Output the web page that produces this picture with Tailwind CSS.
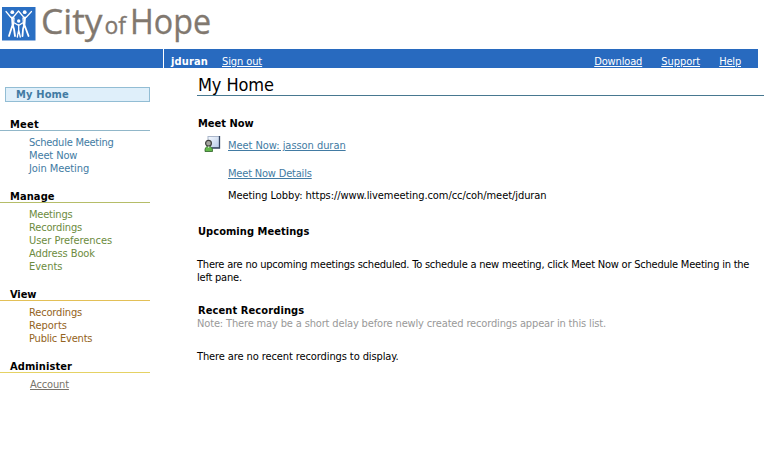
<!DOCTYPE html>
<html lang="en">
<head>
<meta charset="utf-8">
<title>My Home</title>
<script src="https://cdn.jsdelivr.net/npm/@tailwindcss/browser@4"></script>
</head>
<body class="w-[769px] h-[452px] overflow-hidden bg-white text-black font-['DejaVu_Sans_Condensed','DejaVu_Sans',sans-serif] text-[11px] leading-[13px] whitespace-nowrap">
<header>
  <div class="h-[49px]">
    <svg class="block overflow-visible" width="220" height="49" viewBox="0 0 220 49">
      <rect x="2" y="7" width="33.5" height="33.5" fill="#2a6fc3"/>
      <g fill="none" stroke="#fff" stroke-linecap="round" stroke-linejoin="round">
        <path d="M6 11.5 11 17.5 13 17.500 18.500 11 24 17.500 26 17.500 31.500 11.500" stroke-width="1.200"/>
        <path d="M12 17.500 12.500 25 9 36 M12.500 24 14 29 15 36" stroke-width="1.800"/>
        <path d="M25 17.500 24.500 25 28.500 36 M24.500 24 23 29 22.500 36" stroke-width="1.800"/>
        <path d="M11.500 18 14 18 13.500 25 M25.500 18 23 18 23.500 25" stroke-width="1.300"/>
        <path d="M14.500 23 18.700 25.500 22.500 23 M18.700 25 18.700 30 17.300 37 M18.700 30 20.300 37" stroke-width="1.300"/>
      </g>
      <g fill="#fff"><circle cx="12.300" cy="12.200" r="1.900"/><circle cx="24.700" cy="12.200" r="1.900"/><circle cx="18.700" cy="21" r="1.700"/></g>
      <g fill="#81786f" stroke="#81786f" stroke-width=".35" font-family="Open Sans, sans-serif">
        <text x="41" y="33.500" font-size="35.500" textLength="61.500" lengthAdjust="spacingAndGlyphs">City</text>
        <text x="104.500" y="33.500" font-size="24" textLength="21.500" lengthAdjust="spacingAndGlyphs">of</text>
        <text x="130" y="33.500" font-size="35.500" textLength="81" lengthAdjust="spacingAndGlyphs">Hope</text>
      </g>
    </svg>
  </div>
  <div class="flex h-[19px] w-[758px] bg-[#286abf] pt-[6px] text-white">
    <div class="-mt-[6px] h-[19px] w-[164px] border-r border-white"></div>
    <b class="ml-[7px] w-[51px] tracking-[0.15px]">jduran</b>
    <a class="underline tracking-[-0.1px]">Sign out</a>
    <div class="ml-auto flex pr-[17px]"><a class="w-[67px]"><span class="underline tracking-[-0.15px]">Download</span></a><a class="w-[58px]"><span class="underline tracking-[-0.05px]">Support</span></a><a class="underline tracking-[-0.2px]">Help</a></div>
  </div>
</header>
<div class="flex">
  <nav class="w-[150px] pt-[19px]">
    <div class="ml-[5px] h-[15px] border border-[#92bdd4] bg-[#dfeffa] pl-[10px] font-bold text-[#427ba3] leading-[14px] tracking-[0.15px]">My Home</div>
    <div class="mt-[16px] flex flex-col gap-[15px]">
      <section>
        <h2 class="mb-[5px] h-[13px] border-b border-[#91b7c9] pl-[10px] font-bold tracking-[0.2px]">Meet</h2>
        <div class="flex flex-col items-start pl-[29px] text-[#427ba3]"><a class="tracking-[-0.25px]">Schedule Meeting</a><a class="tracking-[-0.12px]">Meet Now</a><a class="tracking-[-0.08px]">Join Meeting</a></div>
      </section>
      <section>
        <h2 class="mb-[5px] h-[13px] border-b border-[#b5bd68] pl-[10px] font-bold tracking-[0.1px]">Manage</h2>
        <div class="flex flex-col items-start pl-[29px] text-[#6c8b40]"><a class="tracking-[-0.2px]">Meetings</a><a class="tracking-[-0.15px]">Recordings</a><a class="tracking-[-0.05px]">User Preferences</a><a class="tracking-[-0.1px]">Address Book</a><a>Events</a></div>
      </section>
      <section>
        <h2 class="mb-[5px] h-[13px] border-b border-[#e3c057] pl-[10px] font-bold tracking-[-0.1px]">View</h2>
        <div class="flex flex-col items-start pl-[29px] text-[#946321]"><a class="tracking-[-0.15px]">Recordings</a><a>Reports</a><a class="tracking-[-0.2px]">Public Events</a></div>
      </section>
      <section>
        <h2 class="mb-[5px] h-[13px] border-b border-[#e5d264] pl-[10px] font-bold tracking-[0.1px]">Administer</h2>
        <div class="flex flex-col items-start pl-[30px] text-[#77736a]"><a class="underline tracking-[-0.15px]">Account</a></div>
      </section>
    </div>
  </nav>
  <main class="ml-[47px] w-[567px]">
    <h1 class="h-[28px] border-b border-[#477890] pl-px pt-[6px] text-[18px] leading-[22px] tracking-[-0.1px]">My Home</h1>
    <h2 class="mt-[21px] pl-px font-bold">Meet Now</h2>
    <div class="mt-[6px] flex h-[17px] pl-[7px]">
      <svg width="17" height="17" viewBox="0 0 17 17">
        <defs><linearGradient id="s" x1="0" y1="0" x2="1" y2="1"><stop offset="0" stop-color="#f6faff"/><stop offset="1" stop-color="#b7cae8"/></linearGradient></defs>
        <rect x="4" y="0.500" width="11.500" height="11" fill="url(#s)" stroke="#aab6ca"/>
        <path d="M15.500 0V12H8" fill="none" stroke="#33435f" stroke-width="1.300"/>
        <path d="M1 15.500Q.5 10.500 4.500 10.200Q9 10.500 8.500 15.500Z" fill="#63b94b" stroke="#2c6127" stroke-width=".8"/>
        <circle cx="4.500" cy="7.300" r="2.900" fill="#a5a5a0" stroke="#3f403e" stroke-width="1.200"/>
        <path d="M3.600 10.500 4.600 12 5.700 10.500" fill="#eff8e9"/>
      </svg>
      <a class="ml-[7px] pt-[3px] text-[#427ba3] underline tracking-[-0.05px]">Meet Now: jasson duran</a>
    </div>
    <div class="mt-[14px] pl-[31px]"><a class="text-[#427ba3] underline tracking-[-0.19px]">Meet Now Details</a></div>
    <p class="mt-[9px] pl-[31px] tracking-[-0.065px]">Meeting Lobby: https://www.livemeeting.com/cc/coh/meet/jduran</p>
    <h2 class="mt-[23px] pl-px font-bold tracking-[0.05px]">Upcoming Meetings</h2>
    <p class="mt-[20px] tracking-[-0.22px]">There are no upcoming meetings scheduled. To schedule a new meeting, click Meet Now or Schedule Meeting in the<br>left pane.</p>
    <h2 class="mt-[20px] pl-px font-bold tracking-[0.1px]">Recent Recordings</h2>
    <p class="text-[#999] tracking-[-0.15px]">Note: There may be a short delay before newly created recordings appear in this list.</p>
    <p class="mt-[20px] tracking-[-0.1px]">There are no recent recordings to display.</p>
  </main>
</div>
</body>
</html>
